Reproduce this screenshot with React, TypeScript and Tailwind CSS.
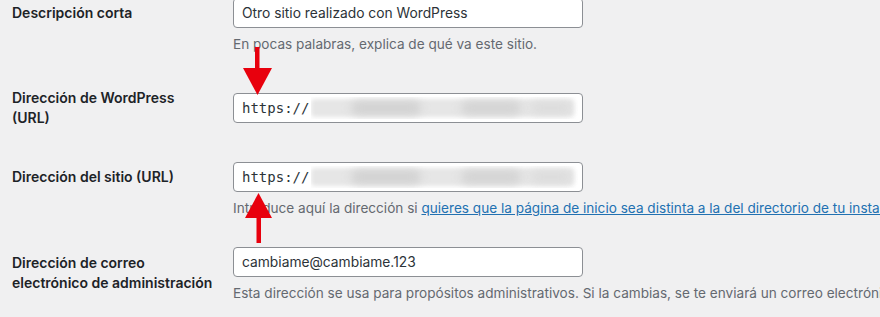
import { FC, ReactNode } from "react";

const font = { fontFamily: "Inter, 'Noto Sans', sans-serif" };

const Blurred: FC = () => (
  <span className="relative ml-[2px] h-[22px] flex-1 overflow-hidden">
    <span className="absolute inset-y-[2px] left-0 right-[4px] rounded-sm bg-[#e6e6e6] blur-[2px]" />
    <span className="absolute left-[40px] top-[4px] h-[14px] w-[70px] rounded-full bg-[#d2d2d2] blur-[4px]" />
    <span className="absolute left-[150px] top-[4px] h-[14px] w-[60px] rounded-full bg-[#d4d4d4] blur-[4px]" />
    <span className="absolute left-[220px] top-[5px] h-[12px] w-[40px] rounded-full bg-[#dcdcdc] blur-[4px]" />
  </span>
);

const Input: FC<{ children: ReactNode; mono?: boolean }> = ({ children, mono }) => (
  <div className="flex h-[30px] w-[350px] items-center overflow-hidden rounded-[4px] border border-[#8c8f94] bg-white pl-[8px] pr-[4px] text-[13.8px] text-[#2c3338]">
    {mono ? (
      <>
        <span className="text-[14px]" style={{ fontFamily: "'DejaVu Sans Mono', monospace" }}>
          https://
        </span>
        <Blurred />
      </>
    ) : (
      children
    )}
  </div>
);

const Row: FC<{ label: ReactNode; labelTop: string; top: string; children: ReactNode }> = ({
  label,
  labelTop,
  top,
  children,
}) => (
  <div className={`flex ${top}`}>
    <div className={`w-[233px] shrink-0 pl-3 text-[14px] font-semibold leading-[20px] text-[#1d2327] ${labelTop}`}>
      {label}
    </div>
    <div className="flex flex-col">{children}</div>
  </div>
);

const Desc: FC<{ children: ReactNode }> = ({ children }) => (
  <p className="mt-[6px] whitespace-nowrap text-[13.6px] leading-[20px] text-[#646970]">{children}</p>
);

export default function App() {
  return (
    <div className="relative h-[317px] w-[880px] overflow-hidden bg-[#f0f0f1]" style={font}>
      <Row label="Descripción corta" labelTop="pt-[5px]" top="-mt-[2px]">
        <Input>Otro sitio realizado con WordPress</Input>
        <Desc>En pocas palabras, explica de qué va este sitio.</Desc>
      </Row>

      <Row label={<>Dirección de WordPress<br />(URL)</>} labelTop="pt-0" top="mt-[34px]">
        <div className="mt-[5px]">
          <Input mono>{null}</Input>
        </div>
      </Row>

      <Row label="Dirección del sitio (URL)" labelTop="pt-[5px]" top="mt-[34px]">
        <Input mono>{null}</Input>
        <Desc>
          Introduce aquí la dirección si{" "}
          <a href="#" className="text-[#2271b1] underline">
            quieres que la página de inicio sea distinta a la del directorio de tu instalación de WordPress
          </a>
          .
        </Desc>
      </Row>

      <Row
        label={<>Dirección de correo<br />electrónico de administración</>}
        labelTop="pt-[6px]"
        top="mt-[29px]"
      >
        <Input>cambiame@cambiame.123</Input>
        <Desc>
          Esta dirección se usa para propósitos administrativos. Si la cambias, se te enviará un correo electrónico a tu nueva dirección para confirmarla.
        </Desc>
      </Row>

      {/* arrows drawn over the form */}
      <svg className="pointer-events-none absolute left-0 top-0" width="880" height="317">
        <rect x="255" y="47" width="4.5" height="23" fill="#e8000d" />
        <polygon points="243,68 272,68 257.5,95" fill="#e8000d" />
        <polygon points="258.5,193 245,218 272,218" fill="#e8000d" />
        <rect x="256.5" y="216" width="4.5" height="27" fill="#e8000d" />
      </svg>
    </div>
  );
}
